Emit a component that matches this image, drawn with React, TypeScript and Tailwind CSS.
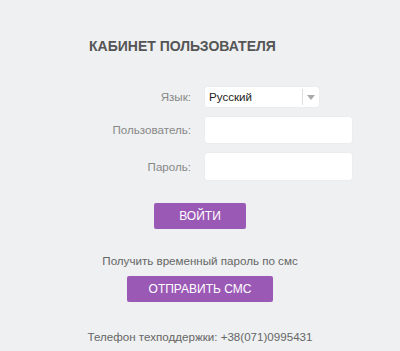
import React from "react";

const App: React.FC = () => {
    return (
        <div
            className="w-[400px] h-[351px] bg-[#eef0f1] overflow-hidden"
            style={{ fontFamily: '"Liberation Sans", Arial, sans-serif' }}
        >
            <h1 className="pl-[89px] pt-[38px] text-[14px] leading-[16px] font-bold text-[#555]">
                КАБИНЕТ ПОЛЬЗОВАТЕЛЯ
            </h1>

            <form className="mt-[33px] flex flex-col gap-[10px]">
                <div className="flex items-center">
                    <label className="w-[191px] text-right text-[11.6px] text-[#888]">Язык:</label>
                    <div className="ml-[14px] w-[114px] h-[20px] bg-white rounded-[2px] shadow-[0_0_1px_rgba(0,0,0,0.15)] flex items-center">
                        <span className="flex-1 pl-[4px] text-[11.6px] text-[#222]">Русский</span>
                        <span className="w-[17px] h-[16px] border-l border-[#ddd] flex items-center justify-center">
                            <svg width="8" height="5" viewBox="0 0 8 5">
                                <path d="M0 0 L8 0 L4 5 Z" fill="#aaa" />
                            </svg>
                        </span>
                    </div>
                </div>
                <div className="flex items-center">
                    <label className="w-[191px] text-right text-[11.6px] text-[#888]">Пользователь:</label>
                    <input
                        type="text"
                        className="ml-[14px] w-[147px] h-[26px] bg-white rounded-[2px] shadow-[0_0_1px_rgba(0,0,0,0.15)] outline-none"
                    />
                </div>
                <div className="flex items-center">
                    <label className="w-[191px] text-right text-[11.6px] text-[#888]">Пароль:</label>
                    <input
                        type="password"
                        className="ml-[14px] w-[147px] h-[27px] bg-white rounded-[2px] shadow-[0_0_1px_rgba(0,0,0,0.15)] outline-none"
                    />
                </div>

                <div className="mt-[13px] flex justify-center">
                    <button
                        type="button"
                        className="w-[92px] h-[26px] bg-[#9b59b6] rounded-[2px] text-white text-[12px] uppercase"
                    >
                        ВОЙТИ
                    </button>
                </div>
            </form>

            <div className="flex flex-col items-center">
                <p className="mt-[25px] text-[11.6px] leading-[14px] text-[#666]">
                    Получить временный пароль по смс
                </p>
                <button
                    type="button"
                    className="mt-[8px] w-[146px] h-[26px] bg-[#9b59b6] rounded-[2px] text-white text-[12px]"
                >
                    ОТПРАВИТЬ СМС
                </button>
                <p className="mt-[28px] text-[11.6px] leading-[14px] text-[#666]">
                    Телефон техподдержки: +38(071)0995431
                </p>
            </div>
        </div>
    );
};

export default App;
